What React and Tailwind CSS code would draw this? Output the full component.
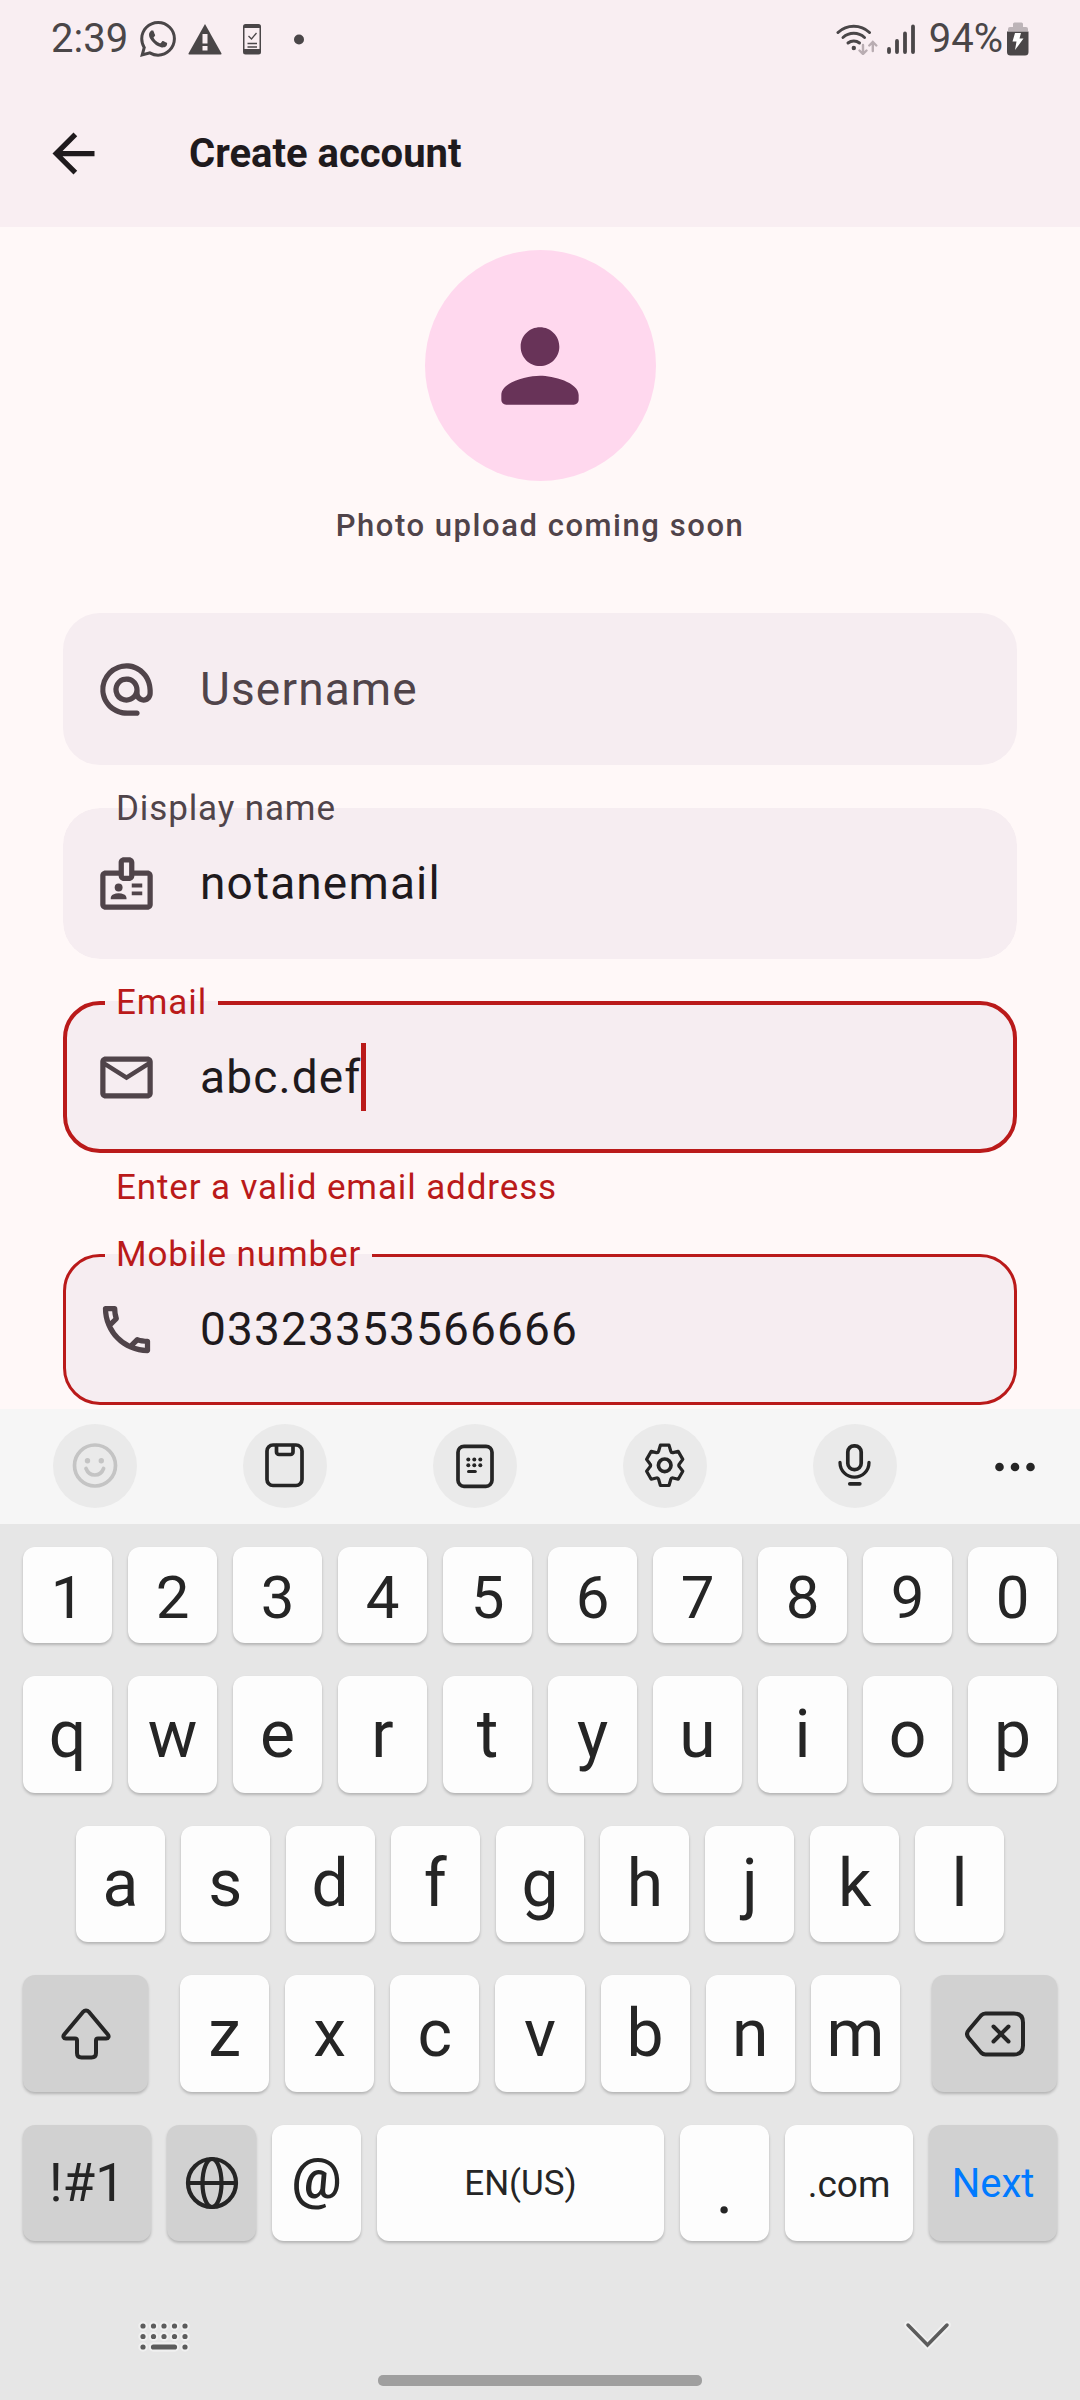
import { MdArrowBack, MdMailOutline, MdOutlineBadge, MdOutlinePhone } from 'react-icons/md'
import { SiWhatsapp } from 'react-icons/si'
import clsx from 'clsx'

function AtIcon({ className }) {
  return (
    <svg viewBox="0 0 24 24" fill="currentColor" className={className}>
      <path d="M12.72 2.03A9.991 9.991 0 0 0 2.03 12.72C2.39 18.01 7.01 22 12.31 22H16c.55 0 1-.45 1-1s-.45-1-1-1h-3.67c-3.73 0-7.15-2.42-8.08-6.03-1.49-5.8 3.91-11.21 9.71-9.71C17.58 5.18 20 8.6 20 12.33v1.1c0 .79-.71 1.57-1.5 1.57s-1.5-.78-1.5-1.57v-1.25c0-2.51-1.78-4.77-4.26-5.12a5.008 5.008 0 0 0-5.66 5.87 4.996 4.996 0 0 0 3.72 3.94c1.84.43 3.59-.16 4.74-1.33.89 1.22 2.67 1.86 4.3 1.21 1.34-.53 2.16-1.9 2.16-3.34v-1.09c0-5.31-3.99-9.93-9.28-10.29zM12 15c-1.66 0-3-1.34-3-3s1.34-3 3-3 3 1.34 3 3-1.34 3-3 3z" />
    </svg>
  )
}

function StatusBar() {
  return (
    <div className="flex h-20 items-center justify-between px-[51px] pb-[3px] text-[40px] leading-[48px] text-[#4a4648]">
      <div className="flex items-center gap-3">
        <span>2:39</span>
        <SiWhatsapp className="h-9 w-9" />
        <svg viewBox="0 0 34 32" className="h-8 w-[34px]">
          <path d="M17 1 33.500 30.500q.3 1-.8 1H1.300q-1.100 0-.8-1Z" fill="currentColor" />
          <path d="M14.500 11h5v9.500h-5zM14.500 23h5v4.500h-5z" fill="#f9eef2" />
        </svg>
        <svg viewBox="0 0 36 32" className="h-8 w-9">
          <rect x="9" y="1" width="18" height="30.500" rx="2.500" fill="currentColor" />
          <rect x="10.500" y="5" width="15" height="21" fill="#f9eef2" />
          <path d="M14.500 13l3 3 5-6M13.500 20.500h9.500M13.500 24h9.500" fill="none" stroke="currentColor" strokeWidth="1.300" />
        </svg>
        <svg viewBox="0 0 34 34" className="h-[34px] w-[34px]">
          <circle cx="17" cy="17.500" r="5" fill="currentColor" />
        </svg>
      </div>
      <div className="flex items-center gap-[14px]">
        <div className="flex items-center gap-2">
          <svg viewBox="0 0 43 32" className="h-8 w-[43px]" fill="none" strokeLinecap="round">
            <g stroke="currentColor" strokeWidth="3">
              <path d="M2 9.500a23 23 0 0 1 31.500 0" />
              <path d="M7 14.500a16 16 0 0 1 21.500 0" />
              <path d="M12 20a9 9 0 0 1 11.500 0" />
            </g>
            <circle cx="17.800" cy="25" r="2.200" fill="currentColor" />
            <path d="M27 22v8.500M23.500 27.500l3.500 3.500 3.500-3.500M36.800 28v-8.500M33.300 22.500l3.500-3.500 3.500 3.500" stroke="#b9adb2" strokeWidth="2.400" />
          </svg>
          <svg viewBox="0 0 28 32" className="h-8 w-7" stroke="currentColor" strokeWidth="3.800" strokeLinecap="round">
            <path d="M2 26v3M10 18v11M18 10.500v18.500M26 3.500v25.500" />
          </svg>
        </div>
        <div className="flex items-center gap-1">
          <span>94%</span>
          <svg viewBox="0 0 22 34" className="h-[34px] w-[22px]">
            <path d="M1 9V7q0-2 2-2h3V2q0-1.500 1.500-1.500h7Q16 .5 16 2v3h3q2 0 2 2v2z" fill="#bdb4b8" />
            <path d="M0 9.500h21.500V30q0 3.500-3.500 3.500H3.500Q0 33.500 0 30z" fill="currentColor" />
            <path d="M8 11h6l-1.500 5.500H16.500L8 28l1.500-8.500H5.500z" fill="#fff" />
          </svg>
        </div>
      </div>
    </div>
  )
}

function Field({ id, label, icon: Icon, value, error, focused, invalid }) {
  return (
    <div>
      <fieldset
        className={clsx(
          'h-[171px] rounded-[37px] bg-[#f6edf1]',
          focused ? 'border-4 pl-[38px]' : 'border-3 pl-[39px]',
          invalid ? 'border-[#ba1a1a]' : 'border-transparent',
        )}
      >
        <legend
          className={clsx(
            'px-[11px] text-[35px] leading-[42px] tracking-wide',
            invalid ? 'text-[#ba1a1a]' : 'text-[#50444a]',
          )}
        >
          <label htmlFor={id}>{label}</label>
        </legend>
        <div className="-ml-[10px] flex h-[106px] items-center pr-8">
          <Icon className="mr-[42px] h-[63px] w-[63px] shrink-0 text-[#50444a]" />
          <input
            id={id}
            defaultValue={value}
            aria-invalid={invalid}
            className="field-sizing-content min-w-0 bg-transparent text-[46px] leading-[68px] tracking-wide text-[#1f1a1d] caret-transparent outline-none"
          />
          {focused && <span className="h-[68px] w-[5px] shrink-0 bg-[#ba1a1a]" />}
        </div>
      </fieldset>
      {error && (
        <p className="mt-[11px] px-[53px] text-[35px] leading-[47px] tracking-wide text-[#ba1a1a]">{error}</p>
      )}
    </div>
  )
}

function Tool({ label, muted, children }) {
  return (
    <button
      type="button"
      aria-label={label}
      className={clsx('h-[84px] w-[84px] rounded-full bg-[#eaeaea]', muted ? 'text-[#c4c4c4]' : 'text-[#252525]')}
    >
      <svg viewBox="0 0 84 84" fill="none" stroke="currentColor" strokeWidth="3.700" strokeLinecap="round" strokeLinejoin="round">
        {children}
      </svg>
    </button>
  )
}

function Toolbar() {
  return (
    <div className="flex h-[115px] items-center bg-[#f6f6f6] pr-[45px] pb-px pl-[53px]">
      <div className="flex flex-1 justify-between">
        <Tool label="Emoji" muted>
          <circle cx="42" cy="41.500" r="20.500" />
          <g fill="currentColor" stroke="none">
            <circle cx="34.500" cy="36.800" r="2.700" />
            <circle cx="48.300" cy="36.800" r="2.700" />
          </g>
          <path d="M33 44.500c1.600 4.200 4.900 6.500 8.800 6.500s7.200-2.300 8.800-6.500" />
        </Tool>
        <Tool label="Clipboard">
          <rect x="24" y="21" width="35" height="40.500" rx="6" />
          <path d="M33.500 21.500v6.500a2.500 2.500 0 0 0 2.500 2.500h11.500a2.500 2.500 0 0 0 2.500-2.500v-6.500" />
        </Tool>
        <Tool label="Keyboard modes">
          <rect x="25" y="22.300" width="34" height="40" rx="6" />
          <g fill="currentColor" stroke="none">
            <circle cx="35.300" cy="35.500" r="2" />
            <circle cx="41.300" cy="35.500" r="2" />
            <circle cx="47.300" cy="35.500" r="2" />
            <circle cx="35.300" cy="41.200" r="2" />
            <circle cx="41.300" cy="41.200" r="2" />
            <circle cx="47.300" cy="41.200" r="2" />
          </g>
          <path d="M35.500 47.500h6.800" strokeWidth="3" />
        </Tool>
        <Tool label="Settings">
          <path
            strokeWidth="3.200"
            d="M37.400 21.100h8.600l1.800 6.200c.3 1 1.200 1.500 2.200 1.300l5.200-1.200 4.600 8-3.300 4.300a2.500 2.500 0 0 0 0 3.200l3.300 4.300-4.600 8-5.200-1.200c-1-.2-1.900.3-2.200 1.300l-1.800 6.200h-8.600l-1.800-6.200c-.3-1-1.200-1.500-2.200-1.300l-5.200 1.200-4.600-8 3.300-4.300a2.500 2.500 0 0 0 0-3.200l-3.300-4.300 4.600-8 5.200 1.200c1 .2 1.900-.3 2.200-1.300z"
          />
          <circle cx="41.700" cy="41.300" r="6.300" />
        </Tool>
        <Tool label="Voice input">
          <rect x="34.800" y="21.800" width="13.400" height="23.800" rx="6.300" />
          <path d="M27 38.500a14.500 14.700 0 0 0 29 0" strokeWidth="3.300" />
          <path d="M36.800 59.800h10" />
        </Tool>
      </div>
      <button type="button" aria-label="More" className="ml-[98px] h-[84px] w-10 text-[#252525]">
        <svg viewBox="0 0 40 84" fill="currentColor">
          <circle cx="4.500" cy="43" r="4.300" />
          <circle cx="20" cy="43" r="4.300" />
          <circle cx="35.500" cy="43" r="4.300" />
        </svg>
      </button>
    </div>
  )
}

function Key({ label, dark, className, children }) {
  return (
    <button
      type="button"
      aria-label={label}
      className={clsx(
        'flex items-center justify-center rounded-[12px] shadow-[0_2px_3px_rgba(0,0,0,0.22)]',
        dark ? 'bg-[#d1d1d1]' : 'bg-[#fdfdfd]',
        className,
      )}
    >
      {children}
    </button>
  )
}

function Letters({ keys }) {
  return keys.split('').map((k) => (
    <Key key={k} className="flex-1">{k}</Key>
  ))
}

function Keyboard() {
  return (
    <div className="mt-auto bg-[#e6e6e6] text-[#252525]">
      <Toolbar />
      <div className="flex flex-col gap-[33px] px-[23px] pt-[23px] text-[66px] leading-none">
        <div className="flex h-24 gap-4 text-[60px]">
          {'1234567890'.split('').map((n) => (
            <Key key={n} className="flex-1 pt-[5px]">{n}</Key>
          ))}
        </div>
        <div className="flex h-[117px] gap-4">
          <Letters keys="qwertyuiop" />
        </div>
        <div className="flex h-[116px] gap-4 px-[53px]">
          <Letters keys="asdfghjkl" />
        </div>
        <div className="flex h-[117px] gap-8">
          <Key label="Shift" dark className="w-[125px]">
            <svg viewBox="0 0 52 54" className="h-[54px] w-[52px]" fill="none" stroke="currentColor" strokeWidth="4" strokeLinejoin="round">
              <path d="M22.800 5.200 4.200 27.500c-1.600 1.900-.6 4 1.600 4H15q2 0 2 2V46q0 4.500 4.500 4.500h10q4.500 0 4.500-4.500V33.500q0-2 2-2h8.200c2.200 0 3.200-2.100 1.600-4L29.200 5.200q-3.200-3.200-6.400 0z" />
            </svg>
          </Key>
          <div className="flex flex-1 gap-4">
            <Letters keys="zxcvbnm" />
          </div>
          <Key label="Backspace" dark className="w-[125px]">
            <svg viewBox="0 0 60 46" className="h-[46px] w-[60px]" fill="none" stroke="currentColor" strokeWidth="4" strokeLinecap="round">
              <path d="M20.500 2.500H49q9 0 9 9v23q0 9-9 9H20.500q-2.500 0-4.500-2L3.800 27q-3.500-4 0-8L16 4.500q2-2 4.500-2z" />
              <path d="m28.500 15.500 15 15M43.500 15.500l-15 15" />
            </svg>
          </Key>
        </div>
        <div className="flex h-[116px] gap-4">
          <Key dark className="flex-[128] text-[53px]">!#1</Key>
          <Key label="Language" dark className="flex-[89]">
            <svg viewBox="0 0 54 54" className="h-[54px] w-[54px]" fill="none" stroke="currentColor" strokeWidth="4.200">
              <circle cx="27" cy="27" r="24" />
              <ellipse cx="27" cy="27" rx="9.500" ry="24" />
              <path d="M3 27h48" />
            </svg>
          </Key>
          <Key className="flex-[89] pb-2 text-[56px] font-medium">@</Key>
          <Key className="flex-[287] text-[35px]">EN(US)</Key>
          <Key className="flex-[89] pt-4">.</Key>
          <Key className="flex-[128] pt-[2px] text-[37px]">.com</Key>
          <Key dark className="flex-[128] pt-[2px] text-[40px] text-[#007aff]">Next</Key>
        </div>
      </div>
      <div className="flex justify-between pt-[78px] pr-[128px] pl-[136px]">
        <button type="button" aria-label="Switch keyboard">
          <svg viewBox="0 0 56 34" className="h-[34px] w-14" strokeLinecap="round" fill="none">
            {['#f0f0f0', '#5c5c5c'].map((color, i) => (
              <g key={color} stroke={color} strokeWidth={i ? 5.2 : 9.5}>
                <path d="M7 7h0M17.500 7h0M28 7h0M38.500 7h0M49 7h0M7 17.500h0M17.500 17.500h0M28 17.500h0M38.500 17.500h0M49 17.500h0M7 28h0M17.500 28h21M49 28h0" />
              </g>
            ))}
          </svg>
        </button>
        <button type="button" aria-label="Hide keyboard">
          <svg viewBox="0 0 50 34" className="h-[34px] w-[50px]" strokeLinecap="round" fill="none">
            <path d="m6 6 19.500 20L45 6" stroke="#f0f0f0" strokeWidth="7.500" />
            <path d="m6 6 19.500 20L45 6" stroke="#5c5c5c" strokeWidth="3.500" />
          </svg>
        </button>
      </div>
      <div className="flex justify-center pt-[22px] pb-[14px]">
        <div className="h-[11px] w-[30%] rounded-[5px] bg-[#9f9f9f]" />
      </div>
    </div>
  )
}

export default function App() {
  return (
    <div className="flex min-h-screen flex-col bg-[#fff8f8] font-['Roboto',sans-serif]">
      <header className="bg-[#f9eef2]">
        <StatusBar />
        <div className="flex h-[147px] items-center pl-[42px]">
          <button type="button" aria-label="Back" className="text-[#1f1a1d]">
            <MdArrowBack className="h-[63px] w-[63px]" />
          </button>
          <h1 className="ml-[84px] text-[40px] leading-[52px] font-bold text-[#1f1a1d]">Create account</h1>
        </div>
      </header>

      <main className="px-[63px] pt-[23px] pb-1">
        {/* Avatar placeholder */}
        <div className="mx-auto flex h-[231px] w-[231px] items-center justify-center rounded-full bg-[#ffd8ee]">
          <svg viewBox="0 0 24 24" className="h-[116px] w-[116px]" fill="#683358">
            <path d="M12 12c2.210 0 4-1.790 4-4s-1.790-4-4-4-4 1.790-4 4 1.790 4 4 4zm0 2c-2.670 0-8 1.340-8 4v1c0 .55.45 1 1 1h14c.55 0 1-.45 1-1v-1c0-2.660-5.330-4-8-4z" />
          </svg>
        </div>
        <p className="mt-[23px] text-center text-[31px] leading-[44px] font-medium tracking-wider text-[#50444a]">
          Photo upload coming soon
        </p>

        <form className="mt-[65px] flex flex-col gap-[23px]">
          <div className="flex h-[152px] items-center rounded-[37px] bg-[#f6edf1] px-8">
            <AtIcon className="mr-[42px] h-[63px] w-[63px] shrink-0 text-[#50444a]" />
            <input
              aria-label="Username"
              placeholder="Username"
              className="min-w-0 flex-1 bg-transparent text-[46px] leading-[68px] tracking-wide text-[#1f1a1d] outline-none placeholder:text-[#50444a]"
            />
          </div>
          <Field id="display-name" label="Display name" icon={MdOutlineBadge} value="notanemail" />
          <Field
            id="email"
            label="Email"
            icon={MdMailOutline}
            value="abc.def"
            error="Enter a valid email address"
            focused
            invalid
          />
          <Field id="mobile" label="Mobile number" icon={MdOutlinePhone} value="03323353566666" invalid />
        </form>
      </main>

      <Keyboard />
    </div>
  )
}
